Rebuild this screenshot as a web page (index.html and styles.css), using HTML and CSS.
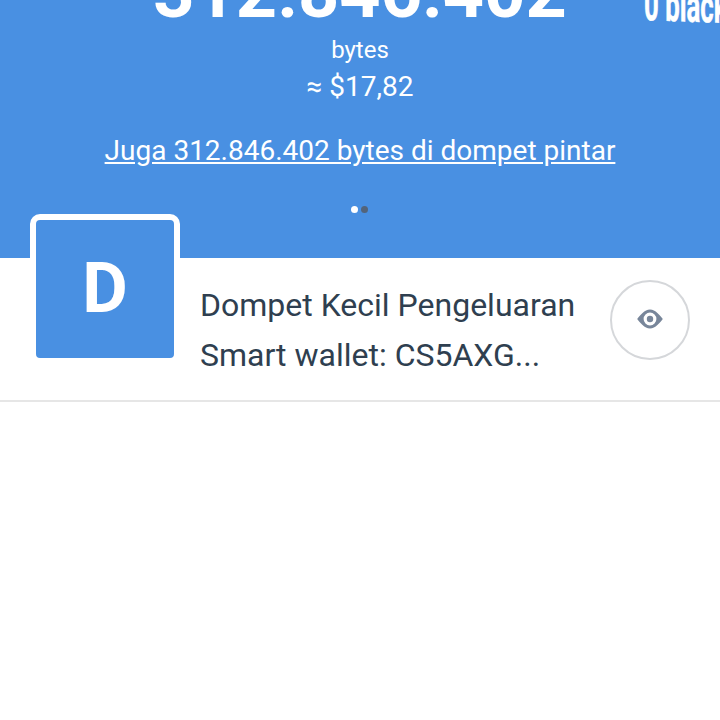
FILE: index.html
```html
<!DOCTYPE html>
<html lang="id">
<head>
<meta charset="utf-8">
<title>Dompet</title>
<link rel="stylesheet" href="styles.css">
</head>
<body>
<header class="balance">
  <div class="amount">312.846.402</div>
  <div class="unit">bytes</div>
  <div class="fiat">≈ $17,82</div>
  <div class="also"><a>Juga 312.846.402 bytes di dompet pintar</a></div>
  <div class="dots"><i class="dot active"></i><i class="dot"></i></div>
  <div class="next">0 blackbytes</div>
</header>
<section class="wallet">
  <div class="avatar">D</div>
  <div class="info">
    <div>Dompet Kecil Pengeluaran</div>
    <div>Smart wallet: CS5AXG...</div>
  </div>
  <button class="view" aria-label="Lihat">
    <svg viewBox="0 0 26 20" width="26" height="20"><path fill="#78869a" fill-rule="evenodd" d="M0.200 10C3 6.500 7.500 0.500 13 0.500S23 6.500 25.800 10C23 13.500 18.500 19.500 13 19.500S3 13.500 0.200 10zM13 3.600a6.400 6.400 0 1 0 0 12.800 6.400 6.400 0 0 0 0-12.800z"/><circle cx="13" cy="10" r="3.200" fill="#78869a"/></svg>
  </button>
</section>
</body>
</html>
```
FILE: styles.css
```css
body {
  margin: 0;
  height: 720px;
  overflow: hidden;
  background: #fff;
  font-family: Roboto, sans-serif;
}
.balance {
  position: relative;
  height: 258px;
  overflow: hidden;
  background: #4990e2;
  color: #fff;
  text-align: center;
}
.amount {
  height: 62px;
  margin-top: -28px;
  font-size: 72px;
  font-weight: 700;
  line-height: 42px;
}
.unit {
  height: 32px;
  font-size: 24px;
  line-height: 32px;
}
.fiat {
  height: 42px;
  font-size: 28px;
  line-height: 42px;
}
.also {
  height: 86px;
  font-size: 28px;
  line-height: 86px;
}
.also a {
  text-decoration: underline;
}
.dots {
  display: flex;
  justify-content: center;
  gap: 2.5px;
  padding: 11.5px 1px 0 0;
}
.dot {
  width: 7.500px;
  height: 7.500px;
  border-radius: 50%;
  background: #53647a;
}
.dot.active {
  background: #fff;
}
.next {
  position: absolute;
  left: 644px;
  top: -23px;
  font-size: 46px;
  font-weight: 700;
  line-height: 54px;
  white-space: nowrap;
  -webkit-text-stroke: 0.6px #fff;
  transform: skewY(2deg) scaleX(0.56);
  transform-origin: 0 100%;
}
.wallet {
  display: flex;
  box-sizing: border-box;
  height: 144px;
  padding: 0 30px;
  border-bottom: 2px solid #e6e6e6;
}
.avatar {
  position: relative;
  box-sizing: border-box;
  width: 150px;
  height: 150px;
  margin-top: -44px;
  border: 6px solid #fff;
  border-radius: 10px;
  background: #4990e2;
  color: #fff;
  font-size: 70px;
  font-weight: 700;
  line-height: 136px;
  text-align: center;
}
.info {
  flex: 1;
  padding: 22px 0 0 20px;
  color: #2f3f50;
  font-size: 32px;
  line-height: 50px;
  white-space: nowrap;
}
.view {
  display: flex;
  align-items: center;
  justify-content: center;
  box-sizing: border-box;
  width: 80px;
  height: 80px;
  margin-top: 22px;
  padding: 0 0 3px;
  border: 2px solid #d5d7da;
  border-radius: 50%;
  background: #fff;
}
```
